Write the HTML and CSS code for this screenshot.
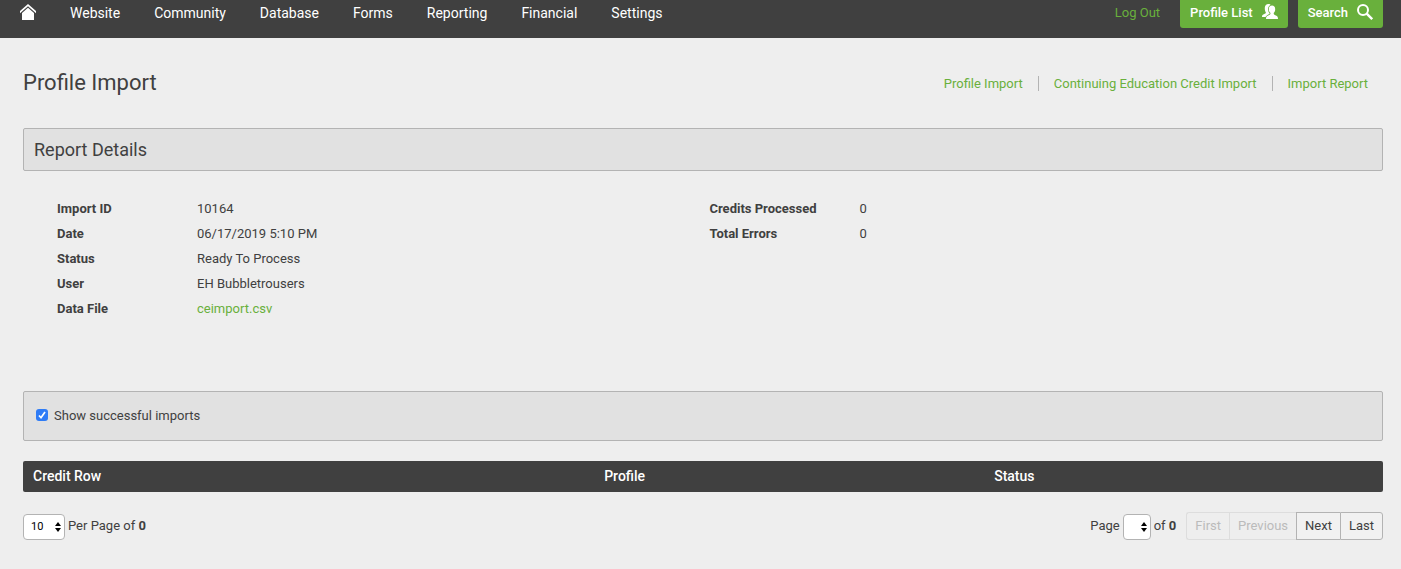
FILE: index.html
```html
<!DOCTYPE html>
<html lang="en">
<head>
    <meta charset="UTF-8">
    <meta name="viewport" content="width=device-width, initial-scale=1.0">
    <title>Profile Import</title>
    <link rel="stylesheet" href="styles.css">
</head>
<body>
    <header class="topbar">
        <nav class="main-nav">
            <a href="#" class="home-link" aria-label="Home">
                <svg width="16" height="16" viewBox="0 0 16 16" fill="#fff">
                    <path d="M8 0 0 7v2.200L8 2.200l8 7V7z"/>
                    <path d="M8 3.800 2 9v7h12V9z"/>
                </svg>
            </a>
            <a href="#">Website</a>
            <a href="#">Community</a>
            <a href="#">Database</a>
            <a href="#">Forms</a>
            <a href="#">Reporting</a>
            <a href="#">Financial</a>
            <a href="#">Settings</a>
        </nav>
        <div class="top-actions">
            <a href="#" class="logout">Log Out</a>
            <button type="button" class="btn-green">
                Profile List
                <svg width="16" height="16" viewBox="0 0 16 16" fill="#fff">
                    <path d="M6.500 0C8 0 8.700.6 9 2L8 10l-4 3H0c0-1.700.4-2.300 1.800-2.800 1.500-.6 2.100-.9 2.100-1.700C3 7.200 2.700 5.500 2.800 3.700 2.900 1.400 4.300 0 6.500 0z"/>
                    <path d="M10 1.600c2 0 3.200 1.400 3.200 3.600 0 1.600-.6 2.900-1.500 3.700 0 1.400.5 1.900 2.200 2.600 1.600.7 2.100 1.400 2.100 3.500H4c0-2.100.5-2.800 2.200-3.500 1.700-.7 2.300-1.200 2.300-2.600-1-.8-1.700-2.100-1.700-3.700 0-2.200 1.200-3.600 3.200-3.600z" stroke="#69b03c" stroke-width="1.600" paint-order="stroke"/>
                </svg>
            </button>
            <button type="button" class="btn-green">
                Search
                <svg width="16" height="16" viewBox="0 0 16 16" fill="none" stroke="#fff">
                    <circle cx="6" cy="6" r="5" stroke-width="2"/>
                    <path d="m9.700 9.700 5.500 5.500" stroke-width="2.400"/>
                </svg>
            </button>
        </div>
    </header>

    <main class="content">
        <div class="page-head">
            <h1>Profile Import</h1>
            <nav class="sub-nav">
                <a href="#">Profile Import</a>
                <a href="#">Continuing Education Credit Import</a>
                <a href="#">Import Report</a>
            </nav>
        </div>

        <h2 class="panel panel-title">Report Details</h2>

        <div class="details">
            <dl>
                <dt>Import ID</dt><dd>10164</dd>
                <dt>Date</dt><dd>06/17/2019 5:10 PM</dd>
                <dt>Status</dt><dd>Ready To Process</dd>
                <dt>User</dt><dd>EH Bubbletrousers</dd>
                <dt>Data File</dt><dd><a href="#">ceimport.csv</a></dd>
            </dl>
            <dl class="totals">
                <dt>Credits Processed</dt><dd>0</dd>
                <dt>Total Errors</dt><dd>0</dd>
            </dl>
        </div>

        <div class="panel filter">
            <input type="checkbox" id="showSuccessful" checked>
            <label for="showSuccessful">Show successful imports</label>
        </div>

        <table class="credits">
            <thead>
                <tr>
                    <th class="col-row">Credit Row</th>
                    <th class="col-profile">Profile</th>
                    <th>Status</th>
                </tr>
            </thead>
        </table>

        <div class="pager">
            <div class="pager-group">
                <span class="select">
                    <select id="perPage" class="per-page">
                        <option>10</option>
                        <option>25</option>
                        <option>50</option>
                    </select>
                    <svg width="6" height="10" viewBox="0 0 6 10"><path d="M3 0 6 4H0zM3 10 0 6h6z"/></svg>
                </span>
                <label for="perPage">Per Page of <b>0</b></label>
            </div>
            <div class="pager-group">
                <label for="page">Page</label>
                <span class="select">
                    <select id="page" class="page-number"></select>
                    <svg width="6" height="10" viewBox="0 0 6 10"><path d="M3 0 6 4H0zM3 10 0 6h6z"/></svg>
                </span>
                <span>of <b>0</b></span>
                <div class="page-buttons">
                    <button type="button" disabled>First</button>
                    <button type="button" disabled>Previous</button>
                    <button type="button">Next</button>
                    <button type="button">Last</button>
                </div>
            </div>
        </div>
    </main>
</body>
</html>
```
FILE: styles.css
```css
* {
    margin: 0;
    padding: 0;
    box-sizing: border-box;
}

body {
    font-family: Roboto, "Liberation Sans", sans-serif;
    font-size: 13px;
    line-height: 20px;
    color: #404040;
    background-color: #eee;
}

a {
    color: #69b03c;
    text-decoration: none;
}

button,
select {
    font-family: inherit;
    color: inherit;
}

svg {
    display: block;
}

/* Top bar */
.topbar {
    display: flex;
    justify-content: space-between;
    align-items: flex-start;
    height: 38px;
    padding: 0 18px 0 20px;
    background-color: #404040;
}

.main-nav {
    display: flex;
    gap: 34px;
    padding-top: 3px;
    font-size: 14px;
}

.main-nav a {
    color: #fff;
}

.home-link {
    padding-top: 1px;
}

.top-actions {
    display: flex;
    gap: 10px;
}

.logout {
    padding: 3px 10px 0 0;
}

.btn-green {
    display: flex;
    align-items: center;
    gap: 9px;
    height: 28px;
    padding: 0 10px 4px;
    border: none;
    border-radius: 0 0 3px 3px;
    background-color: #69b03c;
    color: #fff;
    font-size: 13px;
    font-weight: 500;
    cursor: pointer;
}

/* Page heading */
.content {
    padding: 29px 18px 28px 23px;
}

.page-head {
    display: flex;
    justify-content: space-between;
    align-items: center;
    margin-bottom: 29px;
}

h1 {
    font-size: 22px;
    font-weight: 400;
    line-height: 32px;
}

.sub-nav {
    display: flex;
    align-items: center;
}

.sub-nav a {
    padding: 0 15px;
    line-height: 15px;
}

.sub-nav a + a {
    border-left: 1px solid #b3b3b3;
}

/* Panels */
.panel {
    border: 1px solid #b3b3b3;
    border-radius: 2px;
    background-color: #e1e1e1;
}

.panel-title {
    padding: 10px;
    font-size: 18px;
    font-weight: 400;
    line-height: 21px;
}

.filter {
    display: flex;
    align-items: center;
    gap: 6px;
    height: 50px;
    padding: 0 12px;
    margin-bottom: 20px;
}

.filter input {
    appearance: none;
    width: 12px;
    height: 12px;
    margin-bottom: 2px;
    border-radius: 3px;
    background: #2f7cf6 url("data:image/svg+xml,%3Csvg xmlns='http://www.w3.org/2000/svg' viewBox='0 0 12 12'%3E%3Cpath d='M3 6.500 5 8.700 9 3' fill='none' stroke='white' stroke-width='1.700'/%3E%3C/svg%3E");
}

/* Report details */
.details {
    display: grid;
    grid-template-columns: 48% 1fr;
    padding: 25px 0 70px 34px;
}

.details dl {
    display: grid;
    grid-template-columns: 140px 1fr;
    align-content: start;
    line-height: 25px;
}

.details .totals {
    grid-template-columns: 150px 1fr;
    padding-left: 16px;
}

.details dt {
    font-weight: 700;
}

/* Credits table */
.credits {
    width: 100%;
    border-collapse: collapse;
    border-radius: 2px;
    overflow: hidden;
    background-color: #404040;
    color: #fff;
    table-layout: fixed;
}

.credits th {
    height: 31px;
    padding: 0 10px 1px;
    font-size: 14px;
    font-weight: 500;
    text-align: left;
}

.col-row {
    width: 42%;
}

.col-profile {
    width: 390px;
}

/* Pager */
.pager {
    display: flex;
    justify-content: space-between;
    padding-top: 20px;
}

.pager-group {
    display: flex;
    align-items: center;
    gap: 3px;
}

.select {
    position: relative;
    padding-top: 2px;
}

.select svg {
    position: absolute;
    top: 10px;
    right: 4px;
    pointer-events: none;
}

.select select {
    appearance: none;
    display: block;
    height: 26px;
    padding: 0 7px 1px;
    border: 1px solid #b3b3b3;
    border-radius: 4px;
    background-color: #fff;
    color: #000;
    font-size: 11px;
}

.per-page {
    width: 42px;
}

.page-number {
    width: 28px;
}

.page-buttons {
    display: flex;
    margin-left: 7px;
}

.page-buttons button {
    height: 28px;
    padding: 0 8px 2px;
    border: 1px solid #b3b3b3;
    border-right: none;
    background-color: #f1f1f1;
    font-size: 13px;
}

.page-buttons button:first-child {
    border-radius: 3px 0 0 3px;
}

.page-buttons button:last-child {
    border-right: 1px solid #b3b3b3;
    border-radius: 0 3px 3px 0;
}

.page-buttons button:disabled {
    border-color: #ddd;
    background-color: #eee;
    color: #bbb;
}
```
